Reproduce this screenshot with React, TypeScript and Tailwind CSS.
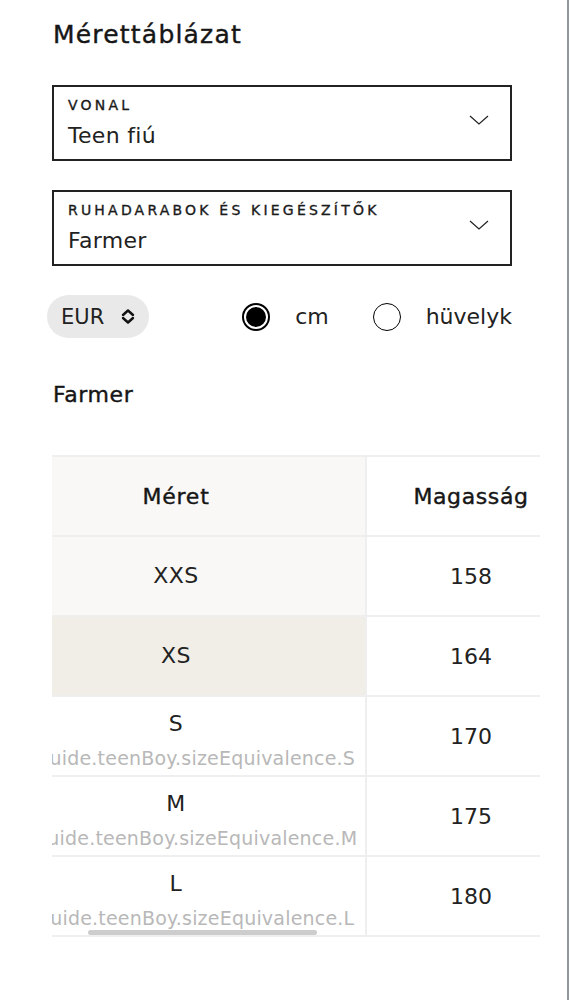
import React from "react";

type Row = { size: string; height: string; note?: string; bg: string };

const rows: Row[] = [
  { size: "XXS", height: "158", bg: "bg-[#f9f8f6]" },
  { size: "XS", height: "164", bg: "bg-[#f1eee8]" },
  { size: "S", height: "170", note: "sizeGuide.teenBoy.sizeEquivalence.S", bg: "bg-white" },
  { size: "M", height: "175", note: "sizeGuide.teenBoy.sizeEquivalence.M", bg: "bg-white" },
  { size: "L", height: "180", note: "sizeGuide.teenBoy.sizeEquivalence.L", bg: "bg-white" },
];

function SelectBox({ label, value }: { label: string; value: string }) {
  return (
    <div className="flex h-[76px] w-[460px] items-center justify-between border-2 border-[#222] pl-[14px] pr-[21px]">
      <div className="flex flex-col">
        <span className="text-[14px] leading-[17px] tracking-[3.2px] text-[#1a1a1a] uppercase [-webkit-text-stroke:0.35px]">
          {label}
        </span>
        <span className="mt-[8px] text-[22px] leading-[27px] tracking-[0.3px] text-[#222]">{value}</span>
      </div>
      <svg width="20" height="10" viewBox="0 0 20 10" className="-mt-[6px]">
        <polyline points="1,1 10,9 19,1" fill="none" stroke="#222" strokeWidth="1.2" />
      </svg>
    </div>
  );
}

function Radio({ checked, label }: { checked: boolean; label: string }) {
  return (
    <label className="flex items-center gap-[25px]">
      {checked ? (
        <span className="flex h-[28px] w-[28px] items-center justify-center rounded-full border-2 border-black p-[2px]">
          <span className="h-full w-full rounded-full bg-black" />
        </span>
      ) : (
        <span className="h-[28px] w-[28px] rounded-full border-[1.5px] border-black" />
      )}
      <span className="text-[22px] leading-[28px] text-[#222]">{label}</span>
    </label>
  );
}

export default function App() {
  return (
    <div className="flex min-h-screen w-full bg-white font-['DejaVu_Sans',sans-serif] text-[#1a1a1a]">
      <div className="flex-1 pt-[20px] pl-[53px]">
        <h1 className="text-[25px] leading-[30px] tracking-[1.2px] text-[#161616] [-webkit-text-stroke:0.4px]">
          Mérettáblázat
        </h1>

        <div className="-ml-px mt-[35px] flex flex-col gap-[29px]">
          <SelectBox label="Vonal" value="Teen fiú" />
          <SelectBox label="Ruhadarabok és kiegészítők" value="Farmer" />
        </div>

        {/* currency + unit */}
        <div className="-ml-px mt-[29px] flex w-[460px] items-center justify-between">
          <button className="-ml-[5px] flex h-[43px] w-[102px] items-center gap-[16px] rounded-full bg-[#e9e9e9] pl-[14px]">
            <span className="text-[21px] leading-[24px] text-[#222]">EUR</span>
            <svg width="16" height="17" viewBox="0 0 16 17">
              <polyline points="3,7 8,2.5 13,7" fill="none" stroke="#111" strokeWidth="2.4" strokeLinecap="round" strokeLinejoin="round" />
              <polyline points="3,10 8,14.5 13,10" fill="none" stroke="#111" strokeWidth="2.4" strokeLinecap="round" strokeLinejoin="round" />
            </svg>
          </button>
          <div className="flex items-center gap-[44px]">
            <Radio checked label="cm" />
            <Radio checked={false} label="hüvelyk" />
          </div>
        </div>

        <h2 className="mt-[43px] text-[22px] leading-[28px] tracking-[0.6px] text-[#161616] [-webkit-text-stroke:0.4px]">
          Farmer
        </h2>

        {/* size table, scrolled sideways */}
        <div className="relative -ml-px mt-[46px] w-[488px] overflow-hidden border-t-2 border-[#efefef]">
          <div className="-ml-[65px] flex w-[588px] flex-col">
            <div className="flex border-b-2 border-[#efefef]">
              <div className="flex h-[78px] w-[380px] items-center justify-center border-r-2 border-[#efefef] bg-[#f9f8f6]">
                <span className="text-[22px] tracking-[0.8px] text-[#161616] [-webkit-text-stroke:0.4px]">Méret</span>
              </div>
              <div className="flex h-[78px] w-[208px] items-center justify-center bg-white">
                <span className="text-[22px] tracking-[0.6px] text-[#161616] [-webkit-text-stroke:0.4px]">Magasság</span>
              </div>
            </div>
            {rows.map((r) => (
              <div key={r.size} className="flex border-b-2 border-[#efefef]">
                <div
                  className={`flex h-[78px] w-[380px] flex-col items-center justify-center border-r-2 border-[#efefef] ${r.bg} ${
                    r.note ? "pt-[10px]" : ""
                  }`}
                >
                  <span className="text-[22px] leading-[26px] tracking-[0.5px] text-[#222]">{r.size}</span>
                  {r.note && (
                    <span className="mt-[8px] whitespace-nowrap text-[19px] leading-[26px] tracking-[0.2px] text-[#b8b8b8]">
                      {r.note}
                    </span>
                  )}
                </div>
                <div className="flex h-[78px] w-[208px] items-center justify-center bg-white">
                  <span className="text-[22px] text-[#222]">{r.height}</span>
                </div>
              </div>
            ))}
          </div>
          <div className="absolute bottom-[2px] left-[36px] h-[5px] w-[229px] rounded-full bg-[#cdcdcd]" />
        </div>
      </div>
      <div className="w-[2px] shrink-0 bg-[#8f979d]" />
      <div className="w-px shrink-0 bg-white" />
    </div>
  );
}
